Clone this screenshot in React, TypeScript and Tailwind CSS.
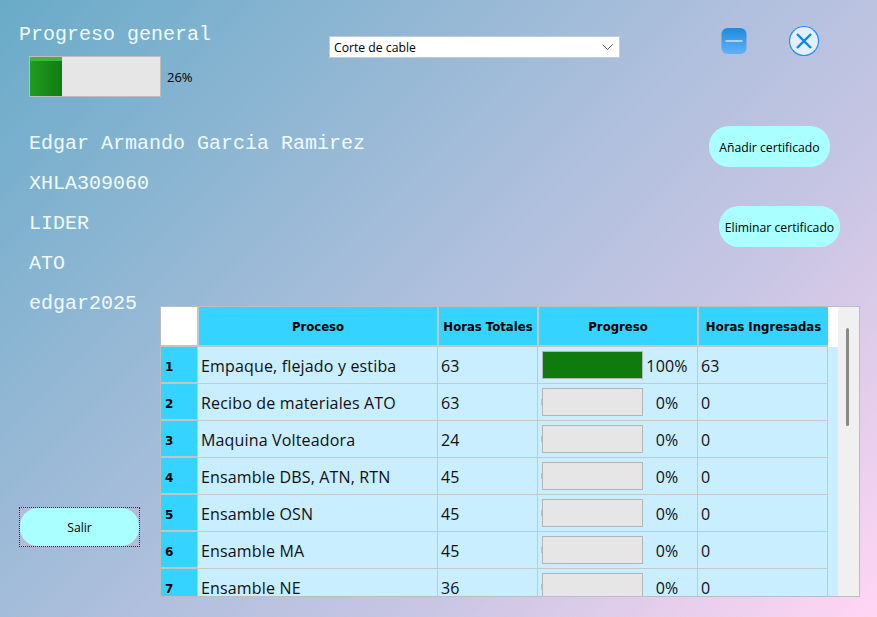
const rows: [number, string, number, number, number][] = [
  [1, "Empaque, flejado y estiba", 63, 100, 63],
  [2, "Recibo de materiales ATO", 63, 0, 0],
  [3, "Maquina Volteadora", 24, 0, 0],
  [4, "Ensamble DBS, ATN, RTN", 45, 0, 0],
  [5, "Ensamble OSN", 45, 0, 0],
  [6, "Ensamble MA", 45, 0, 0],
  [7, "Ensamble NE", 36, 0, 0],
];

const info = ["Edgar Armando Garcia Ramirez", "XHLA309060", "LIDER", "ATO", "edgar2025"];
const sans = "font-['Open_Sans','Noto_Sans',sans-serif]";
const head = "font-['DejaVu_Sans',sans-serif] font-bold text-black";

function HeaderCell({ w, label }: { w: string; label: string }) {
  return (
    <div className={`${w} h-full flex items-center justify-center pt-[3px] whitespace-nowrap bg-[#35d3ff] border-l-2 border-l-[#c4c4c4] border-b-2 border-b-[#c4c4c4] text-[11.7px] ${head}`}>
      {label}
    </div>
  );
}

function Row({ r }: { r: [number, string, number, number, number] }) {
  const [n, name, total, pct, done] = r;
  return (
    <div className={`flex h-[37px] shrink-0 text-[16px] tracking-[0.16px] text-[#101010] ${sans}`}>
      <div className={`w-[36px] h-full flex items-center pl-[4px] pt-[4px] bg-[#35d3ff] border-b-2 border-b-[#c4c4c4] text-[12px] ${head}`}>{n}</div>
      <div className="w-[240px] h-full flex items-center pl-[3px] pt-[2px] border-l border-b border-[#c8c8c8]">{name}</div>
      <div className="w-[100px] h-full flex items-center pl-[3px] pt-[2px] border-l border-b border-[#c8c8c8]">{total}</div>
      <div className="w-[160px] h-full flex items-center pl-[3px] border-l border-b border-[#c8c8c8]">
        <div className={`w-[1px] h-[6px] ${pct === 100 ? "bg-transparent" : "bg-[#c9c9a0]"}`} />
        <div className={`w-[101px] h-[28px] border border-[#b5b5b5] ${pct === 100 ? "bg-[#0f7b0f]" : "bg-[#e6e6e6]"}`} />
        <span className="w-[48px] text-center pt-[2px]">{pct}%</span>
      </div>
      <div className="w-[131px] h-full flex items-center pl-[3px] pt-[2px] border-l border-r border-b border-[#c8c8c8]">{done}</div>
    </div>
  );
}

export default function App() {
  return (
    <div className="flex w-[877px] h-[617px] overflow-hidden bg-[linear-gradient(135deg,#69abc8_0%,#a9bedb_45%,#c9c6e4_70%,#ffd6f4_100%)]">
      <div className="w-[160px] shrink-0 flex flex-col font-['Liberation_Mono',monospace] text-[20px] text-[#eefcff]">
        <div className="mt-[22px] ml-[19px] h-[26px] leading-[26px] whitespace-nowrap">Progreso general</div>
        <div className="mt-[8px] ml-[29px] flex items-center">
          <div className="w-[132px] h-[41px] shrink-0 border border-[#bdbdbd] bg-[#e6e6e6]">
            <div className="w-[32px] h-full flex flex-col">
              <div className="h-[4px] shrink-0 bg-[#3fb53f]" />
              <div className="flex-1 bg-[linear-gradient(90deg,#239c23,#0f7c0f)]" />
            </div>
          </div>
          <span className={`ml-[6px] pt-[3px] text-[13px] text-black ${sans}`}>26%</span>
        </div>
        <div className="mt-[27px] ml-[29px] flex flex-col">
          {info.map((t) => (
            <div key={t} className="h-[40px] leading-[40px] whitespace-nowrap">{t}</div>
          ))}
        </div>
        <button className={`mt-[183px] ml-[19px] w-[121px] h-[40px] p-0 border border-dotted border-[#a00000] bg-[#b4bcd6] text-[12.2px] text-black ${sans}`}>
          <span className="flex w-full h-full items-center justify-center pt-[3px] rounded-[18px] bg-[#aaffff]">Salir</span>
        </button>
      </div>

      <div className="w-[700px] shrink-0 flex flex-col">
        <div className="flex h-[126px] shrink-0 items-start">
          <div className={`mt-[36px] ml-[169px] w-[291px] h-[22px] flex items-center justify-between pl-[4px] pr-[6px] bg-white border border-[#c4cad8] text-[12.2px] text-black ${sans}`}>
            <span className="pt-[2px]">Corte de cable</span>
            <svg width="11" height="7" viewBox="0 0 11 7" fill="none" stroke="#555" strokeWidth="1"><path d="M0.5 0.5 L5.5 5.5 L10.5 0.5" /></svg>
          </div>
          <svg className="mt-[28px] ml-[101px]" width="26" height="26" viewBox="0 0 26 26">
            <defs>
              <linearGradient id="mn" x1="0" y1="0" x2="0" y2="1">
                <stop offset="0" stopColor="#1c8cdc" />
                <stop offset="1" stopColor="#62b2fa" />
              </linearGradient>
            </defs>
            <rect x="0.5" y="0" width="25" height="26" rx="6" fill="url(#mn)" />
            <rect x="4.5" y="12" width="17" height="2" fill="#a9d4f5" />
          </svg>
          <svg className="mt-[25px] ml-[41px]" width="32" height="32" viewBox="0 0 32 32">
            <circle cx="16" cy="16" r="14.5" fill="#e3f0fb" stroke="#1e90ff" strokeWidth="1.2" />
            <path d="M9 9 L23 23 M23 9 L9 23" stroke="#0a84ff" strokeWidth="2.4" />
          </svg>
        </div>
        <button className={`self-end mr-[30px] w-[121px] h-[41px] pt-[3px] shrink-0 rounded-[20px] bg-[#aaffff] text-[12.2px] text-black ${sans}`}>Añadir certificado</button>
        <button className={`self-end mr-[20px] mt-[39px] w-[121px] h-[41px] pt-[3px] shrink-0 rounded-[20px] bg-[#aaffff] text-[12.2px] text-black whitespace-nowrap ${sans}`}>Eliminar certificado</button>
        <div className="mt-[59px] w-[700px] h-[291px] shrink-0 flex overflow-hidden border border-[#bdbdbd] bg-[#c8eeff]">
          <div className="w-[677px] shrink-0 flex flex-col overflow-hidden">
            <div className="flex h-[40px] shrink-0 bg-white">
              <div className="w-[36px] h-full bg-white border-b-2 border-b-[#c4c4c4]" />
              <HeaderCell w="w-[240px]" label="Proceso" />
              <HeaderCell w="w-[100px]" label="Horas Totales" />
              <HeaderCell w="w-[160px]" label="Progreso" />
              <HeaderCell w="w-[131px]" label="Horas Ingresadas" />
            </div>
            {rows.map((r) => (
              <Row key={r[0]} r={r} />
            ))}
          </div>
          <div className="w-[21px] shrink-0 bg-[#f0f0f0] pt-[21px] pl-[8px]">
            <div className="w-[3px] h-[98px] rounded-full bg-[#8a8a8a]" />
          </div>
        </div>
      </div>
    </div>
  );
}
